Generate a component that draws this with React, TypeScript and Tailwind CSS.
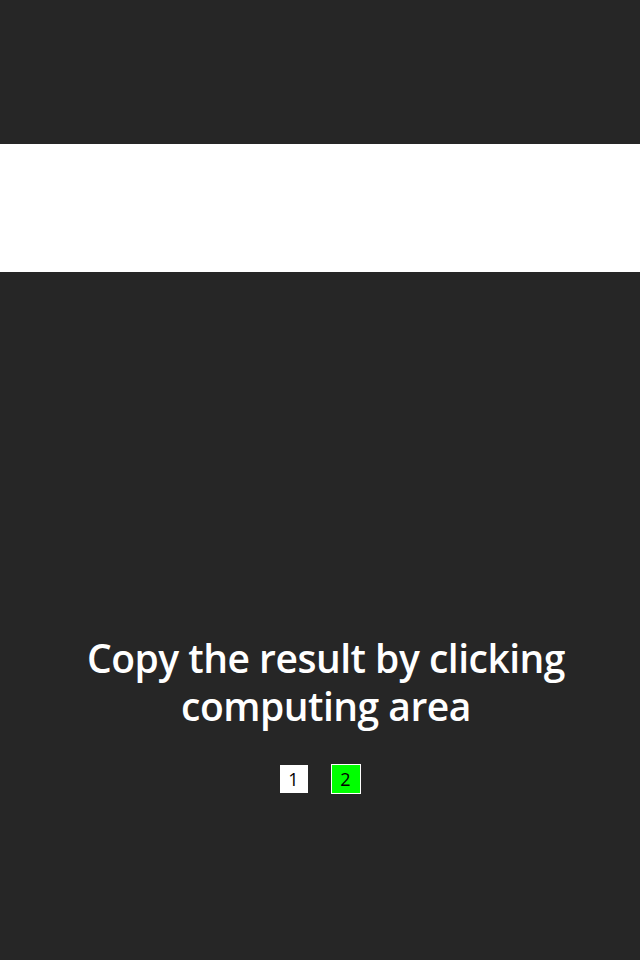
export default function App() {
  return (
    <div className="flex h-[960px] w-[640px] flex-col bg-[#262626]" style={{ fontFamily: '"Open Sans", "Noto Sans", sans-serif' }}>
      <div className="h-[144px]" />
      <div className="h-[128px] bg-white" />
      <div className="flex flex-1 flex-col items-center pt-[362px]">
        <p className="pl-[12px] text-center text-[39px] leading-[48px] font-semibold tracking-[-0.5px] text-white">
          Copy the result by clicking
          <br />
          computing area
        </p>
        <div className="mt-[34px] flex items-center gap-[23px]">
          <div className="flex h-[28px] w-[28px] items-center justify-center bg-white text-[18px] text-black">1</div>
          <div className="flex h-[30px] w-[30px] items-center justify-center border border-white bg-[#00ff00] text-[18px] text-black">2</div>
        </div>
      </div>
    </div>
  );
}
